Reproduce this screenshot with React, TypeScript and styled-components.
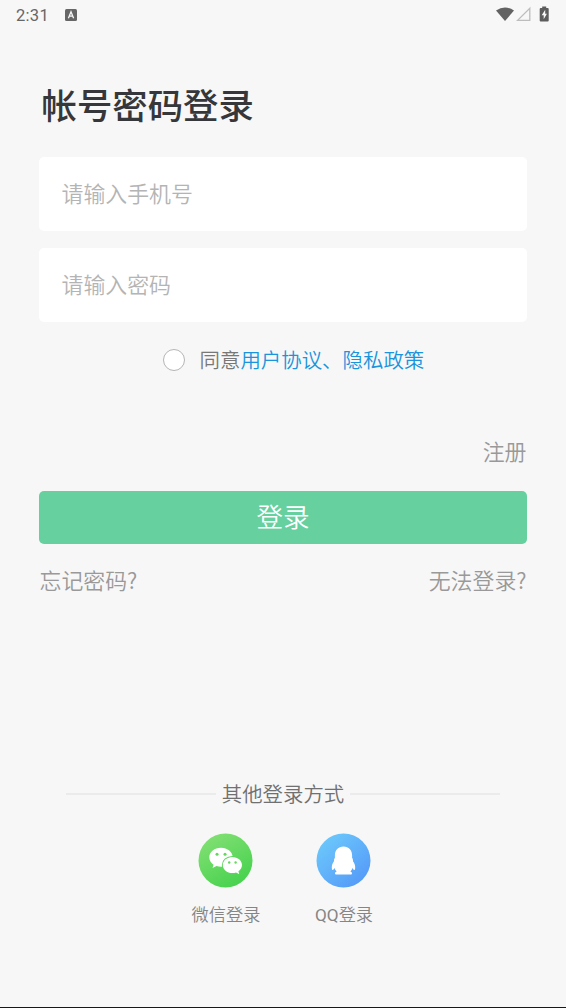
import React from 'react';
import styled, { createGlobalStyle } from 'styled-components';

const GlobalStyle = createGlobalStyle`
  * { box-sizing: border-box; }
  body {
    margin: 0;
    background: #f7f7f7;
    font-family: Roboto, 'Noto Sans CJK SC', sans-serif;
    font-weight: 350;
  }
`;

const Screen = styled.div`
  display: flex;
  flex-direction: column;
  width: 100%;
  height: 1008px;
  background: #f7f7f7;
  border-bottom: 1px solid #17181a;
  overflow: hidden;
`;

const StatusBar = styled.header`
  display: flex;
  align-items: center;
  justify-content: space-between;
  height: 30px;
  padding: 0 16px;
`;

const StatusGroup = styled.div<{ $gap: number }>`
  display: flex;
  align-items: center;
  gap: ${(p) => p.$gap}px;
`;

const Clock = styled.span`
  padding-top: 1px;
  font-size: 16.5px;
  font-weight: 400;
  line-height: 20px;
  letter-spacing: 0.3px;
  color: #666;
`;

const Form = styled.main`
  display: flex;
  flex-direction: column;
  padding: 52px 39px 0;
`;

const Title = styled.h1`
  margin: 0 0 24px 2.5px;
  font-size: 35.4px;
  line-height: 50px;
  font-weight: 500;
  color: #36373b;
`;

const Field = styled.input`
  display: block;
  width: 100%;
  height: 74px;
  margin: 1px 0 17px;
  padding: 0 22.5px;
  border: 0;
  border-radius: 5px;
  background: #fff;
  font: 350 21.9px Roboto, 'Noto Sans CJK SC', sans-serif;
  color: #444;
  outline: none;
  & + & { margin-top: 0; }
  &::placeholder { color: #b4b4b4; opacity: 1; }
`;

const Agreement = styled.label`
  display: flex;
  align-items: center;
  height: 30px;
  margin: 6px 0 0 124px;
  gap: 14.5px;
`;

const Radio = styled.span`
  width: 22px;
  height: 22px;
  border: 1px solid #b5b5b5;
  border-radius: 50%;
  background: #fff;
`;

const AgreementText = styled.span`
  padding-top: 2px;
  font-size: 20.45px;
  line-height: 30px;
  color: #777;
  white-space: nowrap;
`;

const Link = styled.span`
  color: #1a94dc;
`;

const LinkRow = styled.div<{ $top: number; $end?: boolean }>`
  display: flex;
  justify-content: ${(p) => (p.$end ? 'flex-end' : 'space-between')};
  margin-top: ${(p) => p.$top}px;
  padding: 0 0.5px;
  font-family: 'Noto Sans CJK SC', sans-serif;
  font-size: 21.9px;
  line-height: 32px;
  color: #999;
`;

const LoginButton = styled.button`
  height: 53px;
  margin-top: 23.5px;
  padding: 1px 0 0;
  border: 0;
  border-radius: 5px;
  background: #66d09e;
  font: 350 26.6px/52px Roboto, 'Noto Sans CJK SC', sans-serif;
  color: #fff;
`;

const Others = styled.section`
  margin-top: 182.5px;
`;

const Divider = styled.div`
  display: flex;
  align-items: center;
  height: 31px;
  gap: 6px;
  padding: 0 66px;
  font-size: 20.4px;
  line-height: 30px;
  color: #707070;
  &::before, &::after {
    content: '';
    flex: 1;
    height: 2px;
    background: #ebebeb;
  }
`;

const DividerText = styled.span`
  padding-top: 1px;
`;

const Providers = styled.div`
  display: flex;
  justify-content: center;
  margin-top: 23px;
  padding-left: 4px;
`;

const Provider = styled.div`
  display: flex;
  flex-direction: column;
  align-items: center;
  width: 118px;
  svg { display: block; margin-right: 1px; }
`;

const ProviderName = styled.span`
  margin-top: 14px;
  font-size: 17.2px;
  line-height: 26px;
  color: #858585;
`;

const Latin = styled.span`
  font-weight: 400;
`;

const WeChatIcon = () => (
  <svg width="55" height="55" viewBox="0 0 55 55">
    <defs>
      <linearGradient id="wechat" x1="0.2" y1="0" x2="0.8" y2="1">
        <stop offset="0" stopColor="#83e074" />
        <stop offset="1" stopColor="#43d14c" />
      </linearGradient>
    </defs>
    <circle cx="27.5" cy="27.5" r="27" fill="url(#wechat)" />
    <path fill="#fff" d="M23 14.800c-6.500 0-11.700 4.200-11.700 9.500 0 3.100 1.700 5.700 4.300 7.500l-1.100 3.300 4-2c1.400.4 2.900.7 4.500.7 6.500 0 11.700-4.300 11.700-9.500s-5.200-9.500-11.700-9.500z" />
    <ellipse cx="34.400" cy="32" rx="10.600" ry="9.100" fill="#5bd75a" />
    <path fill="#fff" d="M34.400 23.900c-5.400 0-9.600 3.600-9.600 8.100s4.200 8.100 9.600 8.100c1.300 0 2.500-.2 3.600-.6l3.300 1.700-.9-2.900c2.200-1.500 3.600-3.700 3.600-6.300 0-4.500-4.200-8.100-9.600-8.100z" />
    <g fill="#62d85c">
      <circle cx="19" cy="21.300" r="1.500" />
      <circle cx="27" cy="21.300" r="1.500" />
      <circle cx="31.200" cy="29.500" r="1.200" />
      <circle cx="37.600" cy="29.500" r="1.200" />
    </g>
  </svg>
);

const QQIcon = () => (
  <svg width="55" height="55" viewBox="0 0 55 55">
    <defs>
      <linearGradient id="qq" x1="0.15" y1="0.1" x2="0.85" y2="0.9">
        <stop offset="0" stopColor="#6bc7fb" />
        <stop offset="1" stopColor="#559bf8" />
      </linearGradient>
    </defs>
    <circle cx="27.500" cy="27.500" r="27" fill="url(#qq)" />
    <path fill="#fff" d="M27.500 13.600c-5.200 0-8.600 3.700-8.600 8.800v2.300c-.6.800-.9 1.500-.9 2.600v1c-1.500 2-2.200 4.100-2.200 6 0 1.500.2 2.700.7 2.800.6.100 1.500-.9 2.100-2 .4 1.400 1 2.500 2 3.400-1.100.5-1.600 1-1.600 1.900 0 .7.500 1 1.500 1h14c1 0 1.500-.3 1.500-1 0-.9-.5-1.400-1.600-1.900 1-.9 1.600-2 2-3.400.6 1.100 1.500 2.100 2.100 2 .5-.1.700-1.300.7-2.800 0-1.900-.7-4-2.200-6v-1c0-1.100-.3-1.800-.9-2.600v-2.300c0-5.100-3.400-8.800-8.600-8.800z" />
  </svg>
);

const KeyboardBadge = () => (
  <svg width="12" height="12" viewBox="0 0 12 12">
    <rect width="12" height="12" rx="1.500" fill="#666" />
    <path d="M3.400 9.200 6 2.800l2.600 6.400M4.300 7.200h3.400" fill="none" stroke="#f7f7f7" strokeWidth="1.300" />
  </svg>
);

const StatusIcons = () => (
  <svg width="54" height="18" viewBox="0 0 54 18">
    <path d="M0 4.600Q9 -1.800 18 4.600L9 15z" fill="#626262" />
    <path d="M33.800 2.400v12H21.600z" fill="none" stroke="#bdbdbd" strokeWidth="1.300" />
    <path d="M46.200 0.500h4v1.400h1.500q1 0 1 1v11.500q0 1-1 1h-7q-1 0-1-1v-11.500q0-1 1-1h1.500z" fill="#5c5c5c" />
    <path d="M49.200 3.800 45.700 9.200h2v4l3.200-5.400h-1.700z" fill="#f7f7f7" />
  </svg>
);

export default function App() {
  return (
    <>
      <GlobalStyle />
      <Screen>
        <StatusBar>
          <StatusGroup $gap={16}>
            <Clock>2:31</Clock>
            <KeyboardBadge />
          </StatusGroup>
          <StatusIcons />
        </StatusBar>
        <Form>
          <Title>帐号密码登录</Title>
          <Field type="text" placeholder="请输入手机号" />
          <Field type="password" placeholder="请输入密码" />
          <Agreement>
            <Radio />
            <AgreementText>
              同意<Link>用户协议、隐私政策</Link>
            </AgreementText>
          </Agreement>
          <LinkRow $top={60} $end>
            <span>注册</span>
          </LinkRow>
          <LoginButton>登录</LoginButton>
          <LinkRow $top={20.5}>
            <span>忘记密码?</span>
            <span>无法登录?</span>
          </LinkRow>
        </Form>
        <Others>
          <Divider>
            <DividerText>其他登录方式</DividerText>
          </Divider>
          <Providers>
            <Provider>
              <WeChatIcon />
              <ProviderName>微信登录</ProviderName>
            </Provider>
            <Provider>
              <QQIcon />
              <ProviderName>
                <Latin>QQ</Latin>登录
              </ProviderName>
            </Provider>
          </Providers>
        </Others>
      </Screen>
    </>
  );
}
